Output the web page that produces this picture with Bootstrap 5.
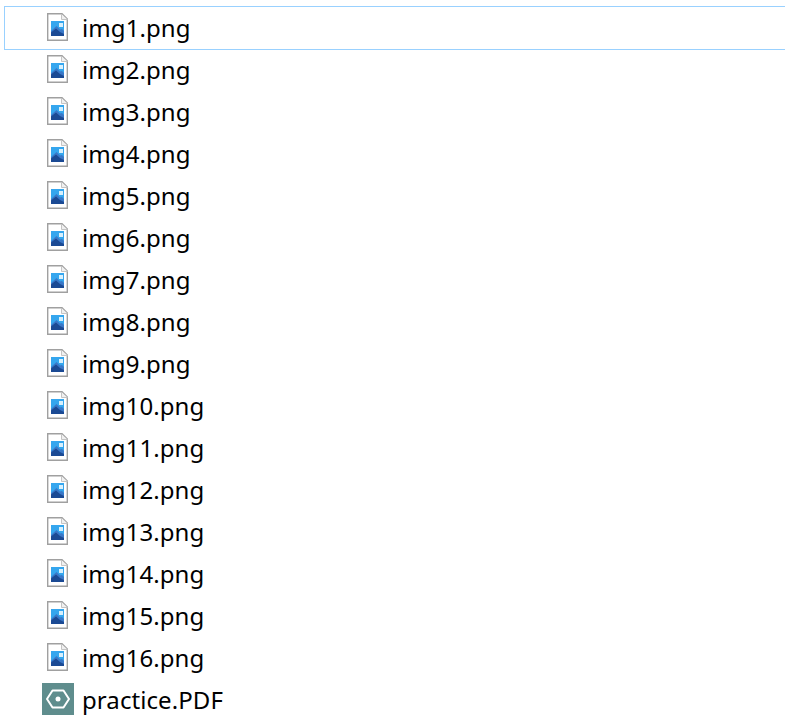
<!DOCTYPE html>
<html lang="en">

<head>
    <meta charset="UTF-8" />
    <meta name="viewport" content="width=device-width, initial-scale=1.0" />
    <title>Files</title>
    <link href="https://cdn.jsdelivr.net/npm/bootstrap@5.3.3/dist/css/bootstrap.min.css" rel="stylesheet">
    <style>
        body {
    background: #fff;
    overflow: hidden;
}

        .file-list {
    padding-top: 7px;
    margin-left: 5px;
    border-radius: 0;
}

        .file-row {
    height: 42px;
    padding: 0;
    border: 0;
    color: #000;
    font-family: "Noto Sans", "Liberation Sans", sans-serif;
    font-size: 24px;
    letter-spacing: .08px;
    line-height: 42px;
    background: transparent;
    position: relative;
}

        .file-row.is-focused::before {
    content: "";
    position: absolute;
    left: -1px;
    right: -2px;
    top: -1px;
    bottom: -1px;
    border: 1px solid #99d1ff;
    border-right: 0;
}

        .icon-slot {
    width: 77px;
    flex: none;
    display: flex;
    padding-left: 37px;
    margin-bottom: 2px;
}

        .icon-slot svg {
    display: block;
}

        .icon-slot .png-file {
    margin-left: 5px;
}
    </style>
</head>

<body>
    <svg width="0" height="0" class="position-absolute">
        <defs>
            <symbol id="png-icon" viewBox="0 0 21 28">
                <path d="M.7.7H15L20.300 6V27.300H.7Z" fill="#fff" stroke="#a0a0a0" stroke-width="1.400" />
                <path d="M14.500 1V6.500H20.500" fill="#f0f0f0" stroke="#c4c4c4" />
                <rect x="4" y="8" width="13" height="15" fill="#35a6ee" />
                <rect x="12" y="10" width="4" height="4" fill="#d8f0fd" />
                <path d="M4 18L9.500 13L13 16.500L15 16L17 18V23H4Z" fill="#3a78c8" />
                <path d="M4 23V19.500L9 15.500L13 19L17 21V23Z" fill="#1b4a94" />
            </symbol>
        </defs>
    </svg>

    <div class="list-group file-list" id="file-list"></div>

    <script>
        const files = [];
        for (let i = 1; i <= 16; i++) {
            files.push({ name: "img" + i + ".png", type: "png" });
        }
        files.push({ name: "practice.PDF", type: "pdf" });

        const pngIcon = '<svg class="png-file" width="21" height="28"><use href="#png-icon"></use></svg>';
        const pdfIcon = `<svg width="32" height="32" viewBox="0 0 32 32">
            <rect width="32" height="32" fill="#5f8d8d" />
            <path d="M10.500 7.500H21.500L27 16L21.500 24.500H10.500L5 16Z" fill="none" stroke="#fff" stroke-width="2" stroke-linejoin="round" />
            <circle cx="16" cy="16" r="2.500" fill="#fff" />
        </svg>`;

        const list = document.getElementById('file-list');
        files.forEach((file, index) => {
            const row = document.createElement('div');
            row.className = 'list-group-item d-flex align-items-center file-row';
            if (index === 0) row.classList.add('is-focused');
            row.innerHTML = `<span class="icon-slot">${file.type === 'pdf' ? pdfIcon : pngIcon}</span><span>${file.name}</span>`;
            list.appendChild(row);
        });
    </script>
    <script src="https://cdn.jsdelivr.net/npm/bootstrap@5.3.3/dist/js/bootstrap.bundle.min.js"></script>
</body>

</html>
